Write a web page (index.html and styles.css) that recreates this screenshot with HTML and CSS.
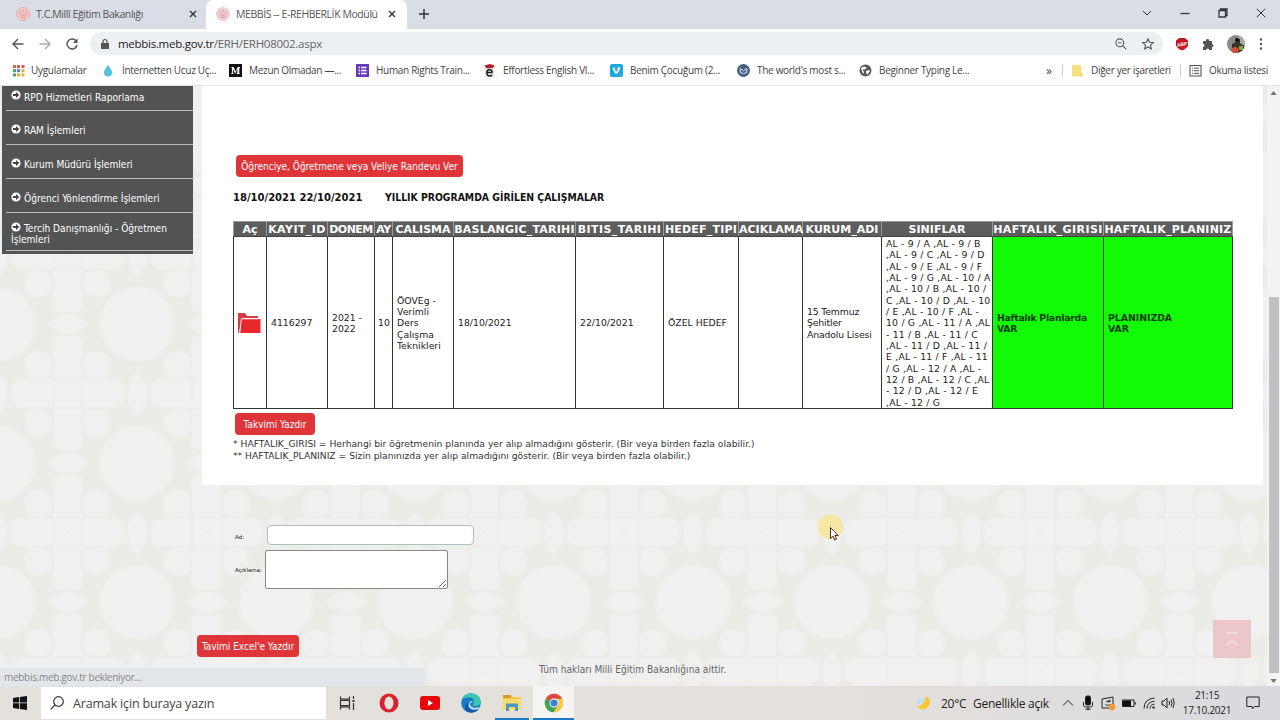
FILE: index.html
```html
<!DOCTYPE html>
<html lang="tr">
<head>
    <meta charset="UTF-8">
    <meta name="viewport" content="width=device-width, initial-scale=1.0">
    <title>MEBBİS -- E-REHBERLİK Modülü</title>
    <link rel="stylesheet" href="styles.css">
</head>
<body>
    <!-- Browser tabs -->
    <div class="tabs">
        <div class="tab">
            <svg class="favicon" viewBox="0 0 14 14"><circle cx="7" cy="7" r="6.3" fill="#f7dcdc" stroke="#ec9a9a"/><circle cx="7" cy="7" r="4" fill="none" stroke="#e98a8a" stroke-width=".8"/><path d="M7 3v6M5 5v3q2 2 4 0V5M5 10h4" fill="none" stroke="#e88" stroke-width=".8"/></svg>
            <span class="tab-title">T.C.Millî Eğitim Bakanlığı</span>
            <svg class="close" viewBox="0 0 8 8"><path d="M1 1l6 6M7 1L1 7"/></svg>
        </div>
        <div class="tab active">
            <svg class="favicon" viewBox="0 0 14 14"><circle cx="7" cy="7" r="6.3" fill="#f5dede" stroke="#e7b2b8"/><circle cx="7" cy="7" r="4" fill="none" stroke="#e0a0a8" stroke-width=".8"/><path d="M7 3v6M5 5v3q2 2 4 0V5M5 10h4" fill="none" stroke="#d9909a" stroke-width=".8"/></svg>
            <span class="tab-title">MEBBİS -- E-REHBERLİK Modülü</span>
            <svg class="close" viewBox="0 0 8 8"><path d="M1 1l6 6M7 1L1 7"/></svg>
        </div>
        <svg class="new-tab" viewBox="0 0 10 10"><path d="M5 0v10M0 5h10"/></svg>
        <div class="window-buttons">
            <svg viewBox="0 0 10 10"><path d="M1 3l4 4 4-4"/></svg>
            <svg viewBox="0 0 10 10"><path d="M.5 5.500h9" stroke-width="1.300"/></svg>
            <svg viewBox="0 0 10 10"><path d="M1 2.500h6.500V9H1zM2.500 2.500V1H9v6.500H7.500" stroke-width="1.300"/></svg>
            <svg viewBox="0 0 10 10"><path d="M.8.8l8.400 8.400M9.200.8L.8 9.200"/></svg>
        </div>
    </div>

    <!-- Address bar -->
    <div class="toolbar">
        <svg class="nav" viewBox="0 0 12 12"><path d="M11.500 6H1M6 1L1 6l5 5"/></svg>
        <svg class="nav disabled" viewBox="0 0 12 12"><path d="M.5 6H11M6 1l5 5-5 5"/></svg>
        <svg class="nav" viewBox="0 0 12 12"><path d="M10.300 3.300A5 5 0 1 0 11 7"/><path d="M11.500.5V5H7z" fill="#555" stroke="none"/></svg>
        <div class="address">
            <svg class="lock" viewBox="0 0 8 10"><path d="M0 4h8v6H0z" fill="#555"/><path d="M2 4V2.500a2 2 0 0 1 4 0V4" fill="none" stroke="#555" stroke-width="1.200"/></svg>
            <span class="url"><b>mebbis.meb.gov.tr</b>/ERH/ERH08002.aspx</span>
            <svg class="zoom-icon" viewBox="0 0 12 12"><circle cx="4.800" cy="4.800" r="3.900"/><path d="M7.700 7.700l3.600 3.600M3 4.800h3.600"/></svg>
            <svg class="star" viewBox="0 0 12 12"><path d="M6 .9l1.500 3.400 3.800.4-2.800 2.500.8 3.700L6 9l-3.300 1.900.8-3.700L.7 4.700l3.800-.4z"/></svg>
        </div>
        <svg class="adblock" viewBox="0 0 14 14"><path d="M4.300 1h5.400L13 3.500V9l-3 3-3 1.500L4 12 1 9V3.500z" fill="#c4161c"/><text x="7" y="9" text-anchor="middle" transform="rotate(-10 7 7)">ABP</text></svg>
        <svg class="puzzle" viewBox="0 0 12 12"><path d="M1 3h3a1.700 1.700 0 1 1 3.300 0H10v3a1.500 1.500 0 1 1 0 3v3H7.200a1.600 1.600 0 0 0-3.200 0H1V8.800a1.500 1.500 0 0 0 0-3z" fill="#555"/></svg>
        <svg class="avatar" viewBox="0 0 18 18"><clipPath id="face"><circle cx="9" cy="9" r="9"/></clipPath><g clip-path="url(#face)"><path d="M0 0h18v18H0z" fill="#8b8983"/><path d="M11 0h7v10h-7z" fill="#aaa9a3"/><path d="M5 18V9l4-2 1-4 3 1v4l4 3v7z" fill="#32362f"/><circle cx="10" cy="5" r="2" fill="#171512"/><circle cx="8" cy="15.500" r="3.500" fill="#d5503a"/><path d="M12 11h4v4h-4z" fill="#8ca53c"/></g></svg>
        <svg class="dots" viewBox="0 0 4 12"><circle cx="2" cy="1.500" r="1.200"/><circle cx="2" cy="6" r="1.200"/><circle cx="2" cy="10.500" r="1.200"/></svg>
    </div>

    <!-- Bookmarks -->
    <div class="bookmarks">
        <div class="bookmark apps"><svg viewBox="0 0 13 13"><path d="M1 1h3v3H1zM5 1h3v3H5zM9.500 1h3v3h-3z" fill="#df5a4e"/><path d="M1 5.200h3v3H1z" fill="#4aa564"/><path d="M5 5.200h3v3H5z" fill="#4a83d6"/><path d="M9.500 5.200h3v3h-3zM5 9.500h3v3H5zM9.500 9.500h3v3h-3z" fill="#e5ae35"/><path d="M1 9.500h3v3H1z" fill="#4aa564"/></svg><span>Uygulamalar</span></div>
        <div class="bookmark"><svg viewBox="0 0 13 13"><path d="M6 1q4 5 4 7.500a4 4 0 0 1-8 0Q2 6 6 1z" fill="#56c2d8"/></svg><span>İnternetten Ucuz Uç...</span></div>
        <div class="bookmark"><svg viewBox="0 0 13 13"><path d="M0 0h13v13H0z" fill="#111"/><path d="M2 3h2.600L6.700 7.500 8.600 3H11v.7l-.7.5v5l.7.7H7.700v-.7l.7-.5V5L6.200 9.800 3.900 5v3.700l.9 1.200H2l.9-1.200V4z" fill="#fff"/></svg><span>Mezun Olmadan —...</span></div>
        <div class="bookmark"><svg viewBox="0 0 13 13"><path d="M0 0h13v13H0z" fill="#673ab7"/><path d="M2.500 3.500H4M5 3.500h5.500M2.500 6.500H4M5 6.500h5.500M2.500 9.500H4M5 9.500h5.500" stroke="#fff" stroke-width="1.300"/></svg><span>Human Rights Train...</span></div>
        <div class="bookmark"><svg viewBox="0 0 13 13"><path d="M2 4h9v9H2z" fill="#e4e4e4"/><path d="M3.500 8.500H9Q9 5.500 6.500 5.500T3.800 9Q4 12 6.500 12q1.800 0 2.500-1" fill="none" stroke="#222" stroke-width="1.500"/><path d="M1.500 1.500L7 0l4.500 1.500L10 4H3z" fill="#b31e2a"/></svg><span>Effortless English Vl...</span></div>
        <div class="bookmark"><svg viewBox="0 0 13 13"><rect width="13" height="13" rx="2" fill="#20a7dc"/><path d="M2.500 4.500l2-1.200 1.500 5q2-2.500 2-3.700l-1 .3q.8-2.200 2.700-1.800 1 .6-.2 3Q7.500 10 5.500 10z" fill="#fff"/></svg><span>Benim Çocuğum (2...</span></div>
        <div class="bookmark short"><svg viewBox="0 0 13 13"><circle cx="6.500" cy="6.500" r="6.500" fill="#465f86"/><path d="M3.200 8.500V4.500l3.300 2.300 3.300-2.300v4q-3.300 2.300-6.600 0z" fill="none" stroke="#dfe8f4"/></svg><span>The world's most s...</span></div>
        <div class="bookmark"><svg viewBox="0 0 13 13"><circle cx="6.500" cy="6.500" r="6" fill="#5a5a5a"/><path d="M2 4l3-1.500 2.500 1L6 5.500H3.500L5 8 4 10zM7 7l3-1 1 1-2.500 3.500L7.500 10z" fill="#fff"/></svg><span>Beginner Typing Le...</span></div>
        <span class="more">»</span>
        <div class="bookmark other"><svg viewBox="0 0 13 13"><path d="M1 1h9.500v11.500H1z" fill="#f7df86"/><path d="M9.500 9h2v3.500h-2z" fill="#ecd070"/></svg><span>Diğer yer işaretleri</span></div>
        <div class="bookmark reading"><svg viewBox="0 0 13 13"><path d="M1 1.500h11v10.500H1z" fill="none" stroke="#555" stroke-width="1.100"/><path d="M3 4.200h1M5 4.200h5M3 6.700h1M5 6.700h5M3 9.300h1M5 9.300h5" stroke="#555"/></svg><span>Okuma listesi</span></div>
    </div>

    <!-- Page -->
    <div class="page">
        <svg class="pattern">
            <defs>
                <pattern id="motif" width="139" height="139" x="693" y="377" patternUnits="userSpaceOnUse">
                    <g class="shapes">
                        <circle cx="0" cy="0" r="37"/><circle cx="139" cy="0" r="37"/><circle cx="0" cy="139" r="37"/><circle cx="139" cy="139" r="37"/>
                        <path d="M50 0Q70-20 90 0Q70 20 50 0zM50 139Q70 119 90 139Q70 159 50 139z"/>
                        <path d="M0 48Q-20 70 0 92Q20 70 0 48zM139 48Q119 70 139 92Q159 70 139 48z"/>
                        <rect x="27" y="28" width="27" height="27" rx="12"/><rect x="85" y="28" width="27" height="27" rx="12"/>
                        <rect x="27" y="85" width="27" height="27" rx="12"/><rect x="85" y="85" width="27" height="27" rx="12"/>
                        <rect x="55" y="13" width="29" height="113" rx="5"/><rect x="13" y="55" width="113" height="29" rx="12"/>
                    </g>
                    <path class="lines" d="M55 13v113M84 13v113M24 55h91M24 84h91M62 62l15 15M77 62L62 77"/>
                </pattern>
            </defs>
            <rect width="100%" height="100%" fill="url(#motif)"/>
        </svg>
        <ul class="menu">
            <li><svg viewBox="0 0 10 10"><circle cx="5" cy="5" r="4.600"/><path d="M2 4h3V2l3.300 3L5 8V6H2z"/></svg>RPD Hizmetleri Raporlama</li>
            <li><svg viewBox="0 0 10 10"><circle cx="5" cy="5" r="4.600"/><path d="M2 4h3V2l3.300 3L5 8V6H2z"/></svg>RAM İşlemleri</li>
            <li><svg viewBox="0 0 10 10"><circle cx="5" cy="5" r="4.600"/><path d="M2 4h3V2l3.300 3L5 8V6H2z"/></svg>Kurum Müdürü İşlemleri</li>
            <li><svg viewBox="0 0 10 10"><circle cx="5" cy="5" r="4.600"/><path d="M2 4h3V2l3.300 3L5 8V6H2z"/></svg>Öğrenci Yönlendirme İşlemleri</li>
            <li class="two-line"><svg viewBox="0 0 10 10"><circle cx="5" cy="5" r="4.600"/><path d="M2 4h3V2l3.300 3L5 8V6H2z"/></svg>Tercih Danışmanlığı - Öğretmen<br>İşlemleri</li>
        </ul>
        <div class="main">
            <div class="panel">
                <button class="btn appointment">Öğrenciye, Öğretmene veya Veliye Randevu Ver</button>
                <div class="heading"><span class="dates">18/10/2021 22/10/2021</span><span class="program">YILLIK PROGRAMDA GİRİLEN ÇALIŞMALAR</span></div>
                <table>
                    <colgroup>
                        <col class="c-open"><col class="c-id"><col class="c-term"><col class="c-month"><col class="c-work"><col class="c-start"><col class="c-end"><col class="c-target"><col class="c-note"><col class="c-school"><col class="c-classes"><col class="c-weekly"><col class="c-plan">
                    </colgroup>
                    <thead>
                        <tr>
                            <th>Aç</th>
                            <th class="wider">KAYIT_ID</th>
                            <th class="tight">DONEM</th>
                            <th class="tight">AY</th>
                            <th>CALISMA</th>
                            <th class="wide">BASLANGIC_TARIHI</th>
                            <th class="wider">BITIS_TARIHI</th>
                            <th class="wide">HEDEF_TIPI</th>
                            <th>ACIKLAMA</th>
                            <th>KURUM_ADI</th>
                            <th>SINIFLAR</th>
                            <th class="wider">HAFTALIK_GIRISI</th>
                            <th class="wide">HAFTALIK_PLANINIZ</th>
                        </tr>
                    </thead>
                    <tbody>
                        <tr>
                            <td><svg class="folder" viewBox="0 0 24 22"><path d="M1 21V1h7l2 3h11v2H5L2 21z" fill="#d93a40"/><path d="M4.500 7H23.500V21H3z" fill="#e8282d"/><path d="M2.800 20.500L4.300 6.800H22" fill="none" stroke="#fff" stroke-width=".8"/></svg></td>
                            <td>4116297</td>
                            <td>2021 -<br>2022</td>
                            <td>10</td>
                            <td>ÖOVEg -<br>Verimli<br>Ders<br>Çalışma<br>Teknikleri</td>
                            <td>18/10/2021</td>
                            <td>22/10/2021</td>
                            <td>ÖZEL HEDEF</td>
                            <td></td>
                            <td class="school">15 Temmuz<br>Şehitler<br>Anadolu Lisesi</td>
                            <td class="classes">AL - 9 / A ,AL - 9 / B<br>,AL - 9 / C ,AL - 9 / D<br>,AL - 9 / E ,AL - 9 / F<br>,AL - 9 / G ,AL - 10 / A<br>,AL - 10 / B ,AL - 10 /<br>C ,AL - 10 / D ,AL - 10<br>/ E ,AL - 10 / F ,AL -<br>10 / G ,AL - 11 / A ,AL<br>- 11 / B ,AL - 11 / C<br>,AL - 11 / D ,AL - 11 /<br>E ,AL - 11 / F ,AL - 11<br>/ G ,AL - 12 / A ,AL -<br>12 / B ,AL - 12 / C ,AL<br>- 12 / D ,AL - 12 / E<br>,AL - 12 / G</td>
                            <td class="yes weekly">Haftalık Planlarda<br>VAR</td>
                            <td class="yes">PLANINIZDA<br>VAR</td>
                        </tr>
                    </tbody>
                </table>
                <button class="btn print">Takvimi Yazdır</button>
                <div class="notes">* HAFTALIK_GIRISI = Herhangi bir öğretmenin planında yer alıp almadığını gösterir. (Bir veya birden fazla olabilir.)<br>** HAFTALIK_PLANINIZ = Sizin planınızda yer alıp almadığını gösterir. (Bir veya birden fazla olabilir.)</div>
            </div>
            <div class="form-group name-group">
                <label for="ad">Ad:</label>
                <input type="text" id="ad">
            </div>
            <div class="form-group">
                <label for="aciklama">Açıklama:</label>
                <textarea id="aciklama"></textarea>
            </div>
            <button class="btn excel">Tavimi Excel'e Yazdır</button>
            <p class="footer">Tüm hakları Milli Eğitim Bakanlığına aittir.</p>
        </div>
        <div class="scrollbar">
            <svg viewBox="0 0 8 5"><path d="M0 5l4-5 4 5z"/></svg>
            <div class="thumb"></div>
            <svg viewBox="0 0 8 5"><path d="M0 0l4 5 4-5z"/></svg>
        </div>
        <div class="to-top"><svg viewBox="0 0 14 15"><path d="M1 1h12M2 13l5-5 5 5"/></svg></div>
        <div class="status">mebbis.meb.gov.tr bekleniyor...</div>
        <svg class="cursor" viewBox="0 0 30 30"><circle cx="13.500" cy="13" r="12.500" fill="#f7e7a3"/><path d="M13.500 13.500v11l2.500-2.300 1.700 3.800 1.800-.8-1.700-3.700h3.400z" fill="#fff" stroke="#333"/></svg>
    </div>

    <!-- Taskbar -->
    <div class="taskbar">
        <svg class="start" viewBox="0 0 14 14"><path d="M0 2l6-1v5.600H0zM6.800.9L14 0v6.600H6.800zM0 7.300h6v5.600l-6-1zM6.800 7.300H14V14l-7.200-1z" fill="#111"/></svg>
        <div class="search"><svg viewBox="0 0 14 14"><circle cx="8.500" cy="5.500" r="4.800"/><path d="M5 9L.7 13.300"/></svg><span>Aramak için buraya yazın</span></div>
        <div class="task view"><svg viewBox="0 0 20 20"><path d="M3.500 3.500v2.700h9V3.500M3.500 16.500v-2.700h9v2.700M3.500 7.500h9v5h-9zM16.500 3v3M16.500 10v7" fill="none" stroke="#333" stroke-width="1.200"/><path d="M15.500 7h2v2h-2z" fill="#333"/></svg></div>
        <div class="task"><svg viewBox="0 0 20 20"><path fill-rule="evenodd" d="M10 .5A9.500 9.500 0 1 1 10 19.500A9.500 9.500 0 1 1 10 .5zM10 3.500C4 4 4 16 10 16.500C16 16 16 4 10 3.500z" fill="#d8232f"/></svg></div>
        <div class="task"><svg viewBox="0 0 20 20"><rect y="3" width="20" height="14" rx="3" fill="#e9040b"/><path d="M8 7l5 3-5 3z" fill="#fff"/></svg></div>
        <div class="task"><svg viewBox="0 0 20 20"><circle cx="10" cy="10" r="9.800" fill="#1785cc"/><path d="M.5 8C1.500 3 5 .2 10 .2c6 0 10 4 9.800 8.300-.2 4-5 5.400-8 3.900 2-2.400.4-5.900-3.600-5.900Q3 6.500.5 8z" fill="#3fc6b0"/><path d="M1 6.500Q4 4 9 4.500q4 .4 4.500 5Q12 7 8 7 4 7 4.500 13 1 12 1 6.500z" fill="#1877c4"/><path d="M7.500 9Q5 14 9.500 16.500q4 2 8.500-1.500-2 4.500-8 4.700Q3 18.500 4 13q.6-3 3.500-4z" fill="#1757a5"/><path d="M12 8.500q-4 1-2.800 4 2.300 4 9.300 1.500l-1.200 2Q10 18 8 13.500 7 9.500 10.500 8z" fill="#e6e3df"/></svg></div>
        <div class="task open"><svg viewBox="0 0 20 20"><path d="M1 2h8l1.500 2H19v13H1z" fill="#f4c64d"/><path d="M1 2h8v3H1z" fill="#d29a29"/><path d="M1 6h18v11H1z" fill="#fbd96b"/><path d="M4 18v-7.500h12V18h-3v-4H7v4z" fill="#4a96bc"/></svg></div>
        <div class="task open current"><svg viewBox="0 0 20 20"><circle cx="10" cy="10" r="9.300" fill="#f6cb45"/><path d="M10 10L1.800 5.500A9.300 9.300 0 0 1 18.200 5.700H10z" fill="#df493d"/><path d="M10 10L1.900 5.500A9.300 9.300 0 0 0 9.500 19.300L14 12z" fill="#40a35b"/><circle cx="10" cy="10" r="4.500" fill="#fff"/><circle cx="10" cy="10" r="3.600" fill="#3d7dde"/></svg></div>
        <div class="tray">
            <svg class="moon" viewBox="0 0 16 16"><path d="M10 1a7 7 0 1 1-9 10q8 0 9-10z" fill="#f7c72e"/><path d="M1 7q0-4 4-4 3-1 4 1-1 4-5 5-3 0-3-2z" fill="#bfe0ee"/></svg>
            <span class="weather">20°C</span><span class="sky">Genellikle açık</span>
            <svg class="chevron" viewBox="0 0 12 14"><path d="M1 9.500l5-5 5 5"/></svg>
            <svg class="mic" viewBox="0 0 12 14"><rect x="3.500" width="5" height="9" rx="1.500" fill="#111"/><path d="M1.500 6v3q0 2 2 2h5q2 0 2-2V6M6 11v3M3.500 13.300h5"/></svg>
            <svg class="update" viewBox="0 0 14 14"><path d="M1 3l11-2v11H1z"/><path d="M9 5.500Q7 4 5 6M4.500 8.500q2 2 4 0M9 3.500v2.300H7"/><circle cx="11" cy="11" r="3.200" fill="#f39a2b" stroke="none"/></svg>
            <svg class="battery" viewBox="0 0 14 14"><path d="M.5 4h11.500v6.500H.5zM13.300 6v2.500"/><path d="M1 4.500h8V10H1z" fill="#111" stroke="none"/></svg>
            <svg class="wifi" viewBox="0 0 12 14"><path d="M1 12.500Q1 3 11.500 2M4 12.500Q4 6 11.500 5.200M7 12.500q0-4 4.500-4.300"/><circle cx="10.500" cy="11.500" r="1.200" fill="#333" stroke="none"/></svg>
            <svg class="sound" viewBox="0 0 14 14"><path d="M1 5h2l3-3v10L3 9H1zM8 5q1.200 2 0 4M10 3.500q2 3.500 0 7M12 2q2.500 5 0 10"/></svg>
            <div class="clock">21:15<br>17.10.2021</div>
            <svg class="notice" viewBox="0 0 14 14"><path d="M.8 1h12.400v9.500H8.500l-2 2.300-.5-2.300H.8z"/></svg>
        </div>
    </div>
</body>
</html>
```

FILE: styles.css
```css
/* Styling for layout */
* { box-sizing: border-box; }
body { margin: 0; width: 1280px; height: 720px; overflow: hidden; display: flex; flex-direction: column; font-family: "Open Sans", sans-serif; background: #fff; color: #444; }
svg { display: block; flex: none; overflow: visible; }
span { white-space: nowrap; }

/* Tabs */
.tabs { height: 29px; display: flex; align-items: center; background: #d9dde5; flex: none; }
.tab { width: 206px; height: 29px; padding: 0 9px 2px 16px; display: flex; align-items: center; gap: 6px; color: #555; font-size: 10.5px; letter-spacing: -0.42px; }
.tab.active { width: 201px; background: #fff; border-radius: 7px 7px 0 0; padding: 0 11px 2px 10px; }
.tab-title { flex: 1; }
.favicon { width: 14px; height: 14px; }
.close { width: 8px; height: 8px; stroke: #333; stroke-width: 1.4; }
.new-tab { width: 10px; height: 10px; margin: 0 0 2px 12px; stroke: #333; stroke-width: 1.5; }
.window-buttons { margin-left: auto; display: flex; gap: 28px; padding: 0 14px 3px 0; }
.window-buttons svg { width: 10px; height: 10px; fill: none; stroke: #333; }

/* Toolbar */
.toolbar { height: 27px; display: flex; align-items: center; padding: 2px 17px 0 12px; flex: none; }
.nav { width: 12px; height: 12px; margin-right: 15px; fill: none; stroke: #555; stroke-width: 1.4; }
.nav.disabled { stroke: #aaa; }
.address { width: 1073px; height: 23px; margin-left: -3px; padding: 0 9px 0 11px; display: flex; align-items: center; border-radius: 12px; background: #edf0f2; }
.lock { width: 8px; height: 10px; }
.url { flex: 1; margin-left: 9px; font-size: 11.5px; letter-spacing: -0.28px; color: #666; }
.url b { font-weight: 400; color: #222; }
.zoom-icon, .star { width: 12px; height: 12px; fill: none; stroke: #555; stroke-width: 1.1; }
.star { margin-left: 15px; }
.adblock { width: 14px; height: 14px; margin-left: 12px; }
.adblock text { font: bold 5px "Liberation Sans", sans-serif; fill: #fff; }
.puzzle { width: 12px; height: 12px; margin-left: 13px; }
.avatar { width: 18px; height: 18px; margin-left: 13px; }
.dots { width: 4px; height: 12px; margin-left: auto; fill: #555; }

/* Bookmarks */
.bookmarks { height: 30px; display: flex; align-items: center; padding: 0 0 1px 12px; font-size: 10px; letter-spacing: -0.3px; border-bottom: 1px solid #e2e3e4; flex: none; }
.bookmark { width: 127px; display: flex; align-items: center; gap: 7px; }
.bookmark svg { width: 13px; height: 13px; }
.bookmark.apps { width: 90px; gap: 6px; }
.bookmark.short { width: 122px; }
.more { width: 16px; margin-left: 60px; font-size: 12px; }
.bookmark.other { width: 118px; height: 13px; padding-left: 8px; border-left: 1px solid #ccc; }
.bookmark.reading { width: 90px; height: 13px; padding-left: 8px; border-left: 1px solid #ccc; }

/* Page background and side menu */
.page { position: relative; height: 600px; display: flex; align-items: flex-start; background: #ebebe8; font-family: "DejaVu Sans", sans-serif; flex: none; overflow: hidden; }
.pattern { position: absolute; left: 0; top: 0; width: 1267px; height: 600px; }
.shapes { fill: #f0f0f0; stroke: #eeeeec; stroke-width: 2; }
.lines { fill: none; stroke: #ebebeb; stroke-width: .6; }
.menu { position: relative; list-style: none; width: 191px; height: 168px; margin: 0 9px 0 2px; padding: 0 0 0 4px; background: #535353; color: #fff; font-family: "DejaVu Sans Condensed", "DejaVu Sans", sans-serif; font-size: 10.1px; }
.menu li { height: 34px; padding: 14px 0 0 18px; line-height: 12px; border-bottom: 1px solid #bbb; position: relative; white-space: nowrap; }
.menu li:first-child { height: 25px; padding-top: 6px; }
.menu li.two-line { height: 38px; padding: 10px 0 0 5px; text-indent: 13px; line-height: 11px; }
.menu svg { position: absolute; left: 5px; top: 13px; width: 10px; height: 10px; fill: #fff; }
.menu li:first-child svg { top: 4px; }
.menu li.two-line svg { top: 9px; }
.menu path { fill: #444; }

/* Main content */
.main { position: relative; width: 1061px; height: 600px; }
.panel { height: 399px; padding: 69px 0 0 31px; background: #fff; }
.btn { display: block; height: 22px; padding: 0; border: 0; border-radius: 4px; background: #e03538; color: #fff; font-family: "DejaVu Sans Condensed", "DejaVu Sans", sans-serif; font-size: 10px; white-space: nowrap; }
.btn.appointment { width: 227px; margin-left: 3px; }
.heading { height: 44px; padding-top: 14px; display: flex; font-size: 10px; font-weight: bold; color: #111; line-height: 13px; }
.dates { width: 152px; }
.program { font-family: "DejaVu Sans Condensed", "DejaVu Sans", sans-serif; font-size: 10.35px; }
table { width: 999px; border-collapse: collapse; table-layout: fixed; }
th { height: 15px; padding: 1px 0 0; background: #5d5d5d; color: #fff; border: 1px solid #999; border-bottom-color: #444; font-size: 11px; line-height: 13px; white-space: nowrap; }
th.wide { letter-spacing: .2px; }
th.wider { letter-spacing: .42px; }
th.tight { letter-spacing: -.5px; }
td { height: 170px; padding: 1px 3px 0 4px; border: 1px solid #333; color: #222; font-size: 9.3px; line-height: 11.35px; white-space: nowrap; }
td:nth-child(1), td:nth-child(4) { padding-left: 3px; }
.school { letter-spacing: -.15px; }
.classes { letter-spacing: .2px; }
.yes { background: #12fb05; color: #083c04; font-weight: bold; }
.weekly { letter-spacing: -.25px; }
.folder { width: 24px; height: 22px; }
.c-open { width: 33px; }
.c-id { width: 61px; }
.c-term { width: 47px; }
.c-month { width: 18px; }
.c-work { width: 61px; }
.c-start { width: 122px; }
.c-end { width: 88px; }
.c-target { width: 75px; }
.c-note { width: 64px; }
.c-school { width: 79px; }
.c-classes { width: 111px; }
.c-weekly { width: 111px; }
.c-plan { width: 129px; }
.btn.print { width: 80px; margin: 4px 0 0 2px; }
.notes { margin-top: 3px; color: #333; font-size: 9.2px; line-height: 11.5px; white-space: nowrap; }

/* Form */
.form-group { display: flex; align-items: center; padding-left: 33px; margin-bottom: 4px; height: 39px; }
.form-group label { width: 30px; font-size: 5.5px; color: #222; }
.name-group { margin-top: 39px; height: 22px; }
.name-group label { padding-top: 3px; }
.form-group input { width: 207px; height: 20px; margin-left: 2px; border: 1px solid #aebfbd; border-radius: 4px; background: #fff; }
.form-group textarea { width: 183px; height: 39px; border: 1px solid #888; border-radius: 2px; background: #fff; }
.btn.excel { width: 102px; margin: 46px 0 0 -5px; }
.footer { margin: 7px 0 0 337px; font-family: "DejaVu Sans Condensed", "DejaVu Sans", sans-serif; font-size: 10.1px; line-height: 12px; color: #666; white-space: nowrap; }

/* Scrollbar and floating parts */
.scrollbar { position: relative; width: 13px; height: 600px; margin-left: auto; background: #f3f3f3; display: flex; flex-direction: column; align-items: center; padding: 5px 0 3px; }
.scrollbar svg { width: 7px; height: 4px; fill: #777; }
.thumb { width: 10px; height: 376px; margin: auto 0 6px; background: #c1c0c3; }
.to-top { position: absolute; left: 1213px; top: 534px; width: 38px; height: 38px; padding: 12px; background: #edc6c9; }
.to-top svg { width: 14px; height: 15px; fill: none; stroke: #f8e2e2; stroke-width: 1.5; }
.status { position: absolute; left: 0; top: 582px; width: 425px; height: 18px; padding-left: 4px; background: #e2e6e9; color: #888; font: 10px/19px "Open Sans", sans-serif; letter-spacing: -0.3px; }
.cursor { position: absolute; left: 817px; top: 428px; width: 30px; height: 30px; }

/* Taskbar */
.taskbar { height: 34px; display: flex; align-items: center; background: linear-gradient(90deg, #e4e0dc 0%, #e4e0db 65%, #d9d9de 100%); flex: none; }
.start { width: 14px; height: 14px; margin: 0 14px 0 13px; }
.search { width: 285px; height: 32px; padding-left: 9px; display: flex; align-items: center; gap: 9px; background: #fff; color: #444; font-size: 12.5px; letter-spacing: -0.17px; }
.search svg { width: 14px; height: 14px; fill: none; stroke: #333; stroke-width: 1.2; }
.task { width: 41px; height: 34px; padding-top: 7px; display: flex; justify-content: center; }
.task svg { width: 20px; height: 20px; }
.task.view { margin-right: 1px; }
.task.open { width: 34px; margin-left: 4px; border-bottom: 2px solid #1c78c5; }
.task.current { width: 41px; background: #f5f4f2; }
.tray { margin-left: auto; height: 34px; padding-right: 20px; display: flex; align-items: center; color: #222; font-size: 12px; letter-spacing: -0.25px; }
.tray svg { width: 14px; height: 14px; fill: none; stroke: #222; }
.tray .moon { width: 16px; height: 16px; stroke: none; margin-right: 9px; }
.weather { width: 32px; }
.sky { width: 89px; }
.clock { width: 56px; margin-left: 4px; text-align: center; font-size: 10px; line-height: 15px; }
.tray .chevron { width: 12px; }
.tray .mic { width: 12px; margin-left: 8px; }
.tray .update { margin-left: 7px; }
.tray .battery { margin-left: 7px; }
.tray .wifi { width: 12px; margin-left: 7px; }
.tray .sound { margin-left: 6px; }
.tray .notice { margin-left: 11px; }
```
